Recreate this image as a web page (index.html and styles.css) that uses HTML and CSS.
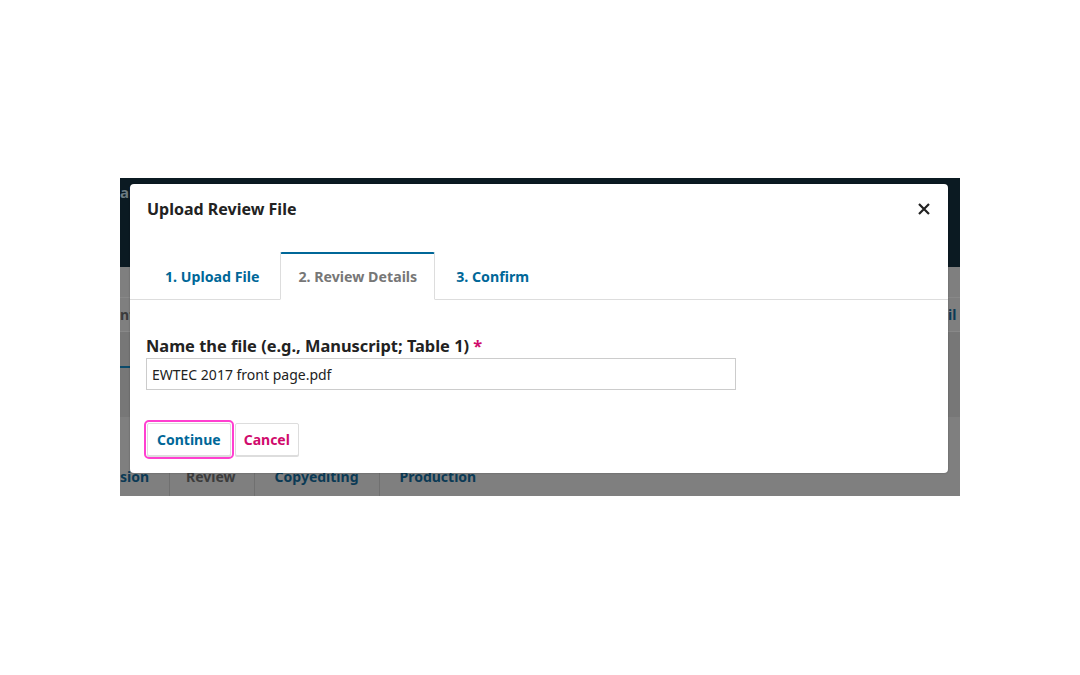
FILE: index.html
```html
<!doctype html>
<html lang="en">
    <head>
        <meta charset="UTF-8">
        <title>Upload Review File</title>
        <link rel="stylesheet" href="styles.css">
    </head>
    <body>
        <div class="stage">
            <!-- page behind the modal, dimmed -->
            <div class="bg-header"><span class="bg-site">al</span></div>
            <div class="bg-tabs">
                <span class="bg-left">nt</span>
                <span class="bg-right">il</span>
            </div>
            <div class="bg-band"><span class="bg-mark"></span></div>
            <div class="bg-stages">
                <span class="bg-stage blue">sion</span>
                <span class="bg-stage grey">Review</span>
                <span class="bg-stage blue">Copyediting</span>
                <span class="bg-stage blue plain">Production</span>
            </div>

            <!-- modal -->
            <div class="modal">
                <div class="modal-header">
                    <h2 class="modal-title">Upload Review File</h2>
                    <span class="close">
                        <svg width="12" height="12" viewBox="0 0 12 12"><path d="M1 1L11 11M11 1L1 11" stroke="#222" stroke-width="2.2" fill="none"/></svg>
                    </span>
                </div>
                <div class="tabs">
                    <div class="tab">1. Upload File</div>
                    <div class="tab active">2. Review Details</div>
                    <div class="tab">3. Confirm</div>
                </div>
                <div class="modal-body">
                    <label class="field-label">Name the file (e.g., Manuscript; Table 1) <span class="req">*</span></label>
                    <div class="field-input">EWTEC 2017 front page.pdf</div>
                    <div class="buttons">
                        <button class="btn btn-continue">Continue</button>
                        <button class="btn btn-cancel">Cancel</button>
                    </div>
                </div>
            </div>
        </div>
    </body>
</html>
```

FILE: styles.css
```css
* {
    box-sizing: border-box;
}
html {
    font-family: "Noto Sans", "Open Sans", sans-serif;
    font-size: 14px;
    color: #222;
    background-color: #fff;
}
body {
    margin: 0;
    padding: 178px 0 0 120px;
}

/* Page behind the modal */
.stage {
    position: relative;
    width: 840px;
    height: 318px;
    background-color: #7f7f7f;
    overflow: hidden;
}
.bg-header {
    height: 89px;
    background-color: #0b1a22;
    padding: 4px 0 0 0;
}
.bg-site {
    font-size: 15px;
    font-weight: 700;
    color: #6b7a80;
}
.bg-tabs {
    display: flex;
    justify-content: space-between;
    align-items: center;
    margin-top: 30px;
    border-top: 1px solid #888;
    border-bottom: 1px solid #888;
    font-weight: 700;
    font-size: 14px;
    height: 35px;
}
.bg-left {
    color: #3a3a3a;
}
.bg-right {
    color: #0b3a55;
    width: 12px;
    overflow: hidden;
    white-space: nowrap;
}
.bg-band {
    height: 85px;
    background-color: #777;
    padding-top: 34px;
}
.bg-mark {
    display: block;
    width: 10px;
    height: 2px;
    background-color: #0b4a6a;
}
.bg-stages {
    display: flex;
    margin-top: 41px;
    height: 39px;
    font-size: 14px;
    font-weight: 700;
}
.bg-stage {
    display: flex;
    align-items: center;
    padding: 0 20px 2px 20px;
    border-right: 1px solid #707070;
}
.bg-stage:first-child {
    padding-left: 0;
}
.bg-stage.plain {
    border-right: none;
}
.bg-stage.blue {
    color: #0b3a55;
}
.bg-stage.grey {
    color: #3c3c3c;
    padding: 0 18px 2px 16px;
}

/* Modal */
.modal {
    position: absolute;
    left: 10px;
    top: 6px;
    width: 818px;
    height: 289px;
    background-color: #fff;
    border-radius: 4px;
    box-shadow: 0 0 2px rgba(0, 0, 0, 0.3);
}
.modal-header {
    display: flex;
    justify-content: space-between;
    align-items: center;
    height: 50px;
    padding: 0 16px 0 17px;
}
.modal-title {
    margin: 0;
    font-size: 16px;
    font-weight: 700;
    color: #222;
}
.close {
    display: flex;
    margin-right: 2px;
}

.tabs {
    display: flex;
    margin-top: 18px;
    padding-left: 17px;
    border-bottom: 1px solid #ddd;
    height: 48px;
}
.tab {
    display: flex;
    align-items: center;
    padding: 0 17px;
    font-weight: 700;
    font-size: 14.2px;
    color: #006798;
    border: 1px solid transparent;
    border-top-width: 2px;
    margin-bottom: -1px;
}
.tab:first-child {
    padding-right: 20px;
}
.tab.active {
    color: #777;
    background-color: #fff;
    border-color: #006798 #ddd #fff #ddd;
    border-radius: 2px 2px 0 0;
}
.tab:last-child {
    padding-left: 20px;
}

.modal-body {
    padding: 34px 17px 0 16px;
}
.field-label {
    display: block;
    font-size: 16.4px;
    font-weight: 700;
    color: #222;
    margin-bottom: 1px;
}
.req {
    color: #d00a6c;
}
.field-input {
    width: 590px;
    height: 32px;
    border: 1px solid #ccc;
    padding: 0 5px;
    display: flex;
    align-items: center;
    font-size: 14px;
    color: #222;
}

.buttons {
    display: flex;
    gap: 4px;
    margin-top: 33px;
    padding-left: 1px;
}
.btn {
    height: 33px;
    padding: 0 8px;
    font-family: inherit;
    font-size: 14px;
    font-weight: 700;
    background-color: #fff;
    border: 1px solid #ddd;
    border-radius: 2px;
    box-shadow: 0 1px 0 #ddd;
}
.btn-continue {
    color: #006798;
    padding: 0 9px;
    outline: 2px solid #ff40d0;
    outline-offset: 1px;
}
.btn-cancel {
    color: #d00a6c;
}
```
